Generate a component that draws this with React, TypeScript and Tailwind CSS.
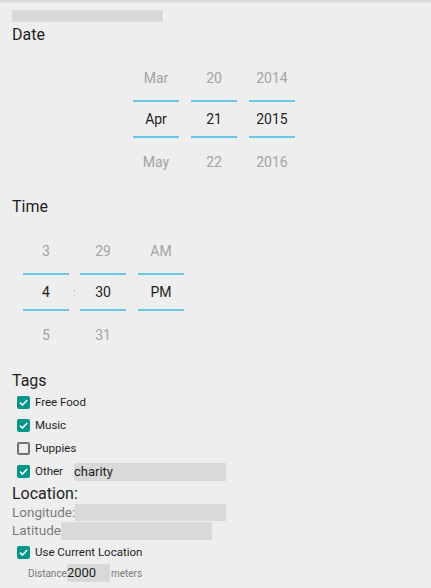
import React from "react";

const Check = ({ checked }: { checked: boolean }) =>
  checked ? (
    <div className="w-[13px] h-[13px] rounded-[2px] bg-[#009688] flex items-center justify-center shrink-0">
      <svg width="11" height="11" viewBox="0 0 11 11">
        <path d="M2 5.6 L4.4 8 L9.2 3" fill="none" stroke="#ffffff" strokeWidth="1.6" />
      </svg>
    </div>
  ) : (
    <div className="w-[13px] h-[13px] rounded-[2px] border-2 border-[#737373] shrink-0" />
  );

const Col = ({ top, mid, bot }: { top: string; mid: string; bot: string }) => (
  <div className="w-[46px] flex flex-col items-stretch text-[14px]">
    <div className="h-[45px] pt-[1px] flex items-center justify-center text-[#a3a3a3]">{top}</div>
    <div className="h-[2px] bg-[#6cc6ea]" />
    <div className="h-[34px] pt-[1px] flex items-center justify-center text-[#1f1f1f]">{mid}</div>
    <div className="h-[2px] bg-[#6cc6ea]" />
    <div className="h-[45px] pt-[3px] flex items-center justify-center text-[#a3a3a3]">{bot}</div>
  </div>
);

const Tag = ({ checked, label, children }: { checked: boolean; label: string; children?: React.ReactNode }) => (
  <div className="h-[23px] flex items-center pl-[5px]">
    <Check checked={checked} />
    <span className={children ? "ml-[5px] w-[39px] text-[11.5px] text-[#1f1f1f]" : "ml-[5px] text-[11.5px] text-[#1f1f1f]"}>{label}</span>
    {children}
  </div>
);

export default function App() {
  return (
    <div
      className="relative min-h-[588px] w-[431px] bg-[#eeeeee] overflow-hidden"
      style={{ fontFamily: "Roboto, 'Noto Sans', sans-serif" }}
    >
      <div className="absolute top-0 left-0 right-0 h-[4px] bg-gradient-to-b from-[#d6d6d6] to-[#eeeeee]" />
      <div className="relative pt-[10px] px-[12px]">
        <div className="h-[12px] w-[151px] bg-[#d9d9d9]" />
        <div className="mt-[3px] text-[16px] leading-[19px] text-[#1f1f1f]">Date</div>
        <div className="mt-[11px] ml-[121px] flex gap-[12px]">
          <Col top="Mar" mid="Apr" bot="May" />
          <Col top="20" mid="21" bot="22" />
          <Col top="2014" mid="2015" bot="2016" />
        </div>
        <div className="mt-[14px] text-[16px] leading-[19px] text-[#1f1f1f]">Time</div>
        <div className="mt-[12px] ml-[11px] flex">
          <Col top="3" mid="4" bot="5" />
          <div className="w-[11px] flex flex-col">
            <div className="h-[47px]" />
            <div className="h-[34px] pt-[1px] flex items-center justify-center text-[10px] text-[#a3a3a3]">:</div>
          </div>
          <Col top="29" mid="30" bot="31" />
          <div className="w-[12px]" />
          <Col top="AM" mid="PM" bot="" />
        </div>
        <div className="mt-[15px] text-[16px] leading-[19px] text-[#1f1f1f]">Tags</div>
        <div className="mt-[1px] flex flex-col">
          <Tag checked label="Free Food" />
          <Tag checked label="Music" />
          <Tag checked={false} label="Puppies" />
          <Tag checked label="Other">
            <div className="w-[152px] h-[18px] bg-[#d9d9d9] text-[13px] leading-[18px] text-[#1f1f1f]">charity</div>
          </Tag>
        </div>
        <div className="mt-[2px] text-[16px] leading-[18px] text-[#1f1f1f]">Location:</div>
        <div className="flex items-center h-[18px]">
          <span className="text-[13.5px] text-[#7a7a7a]">Longitude:</span>
          <div className="w-[151px] h-[17px] bg-[#d9d9d9]" />
        </div>
        <div className="flex items-center h-[19px]">
          <span className="text-[13.5px] text-[#7a7a7a]">Latitude</span>
          <div className="w-[151px] h-[18px] bg-[#d9d9d9]" />
        </div>
        <div className="mt-[1px]">
          <Tag checked label="Use Current Location" />
        </div>
        <div className="flex items-center h-[18px] ml-[16px]">
          <span className="text-[10px] text-[#7a7a7a]">Distance</span>
          <div className="w-[43px] h-[18px] bg-[#d9d9d9] text-[13px] leading-[18px] text-[#1f1f1f]">2000</div>
          <span className="ml-[1px] text-[10px] text-[#7a7a7a]">meters</span>
        </div>
      </div>
    </div>
  );
}
